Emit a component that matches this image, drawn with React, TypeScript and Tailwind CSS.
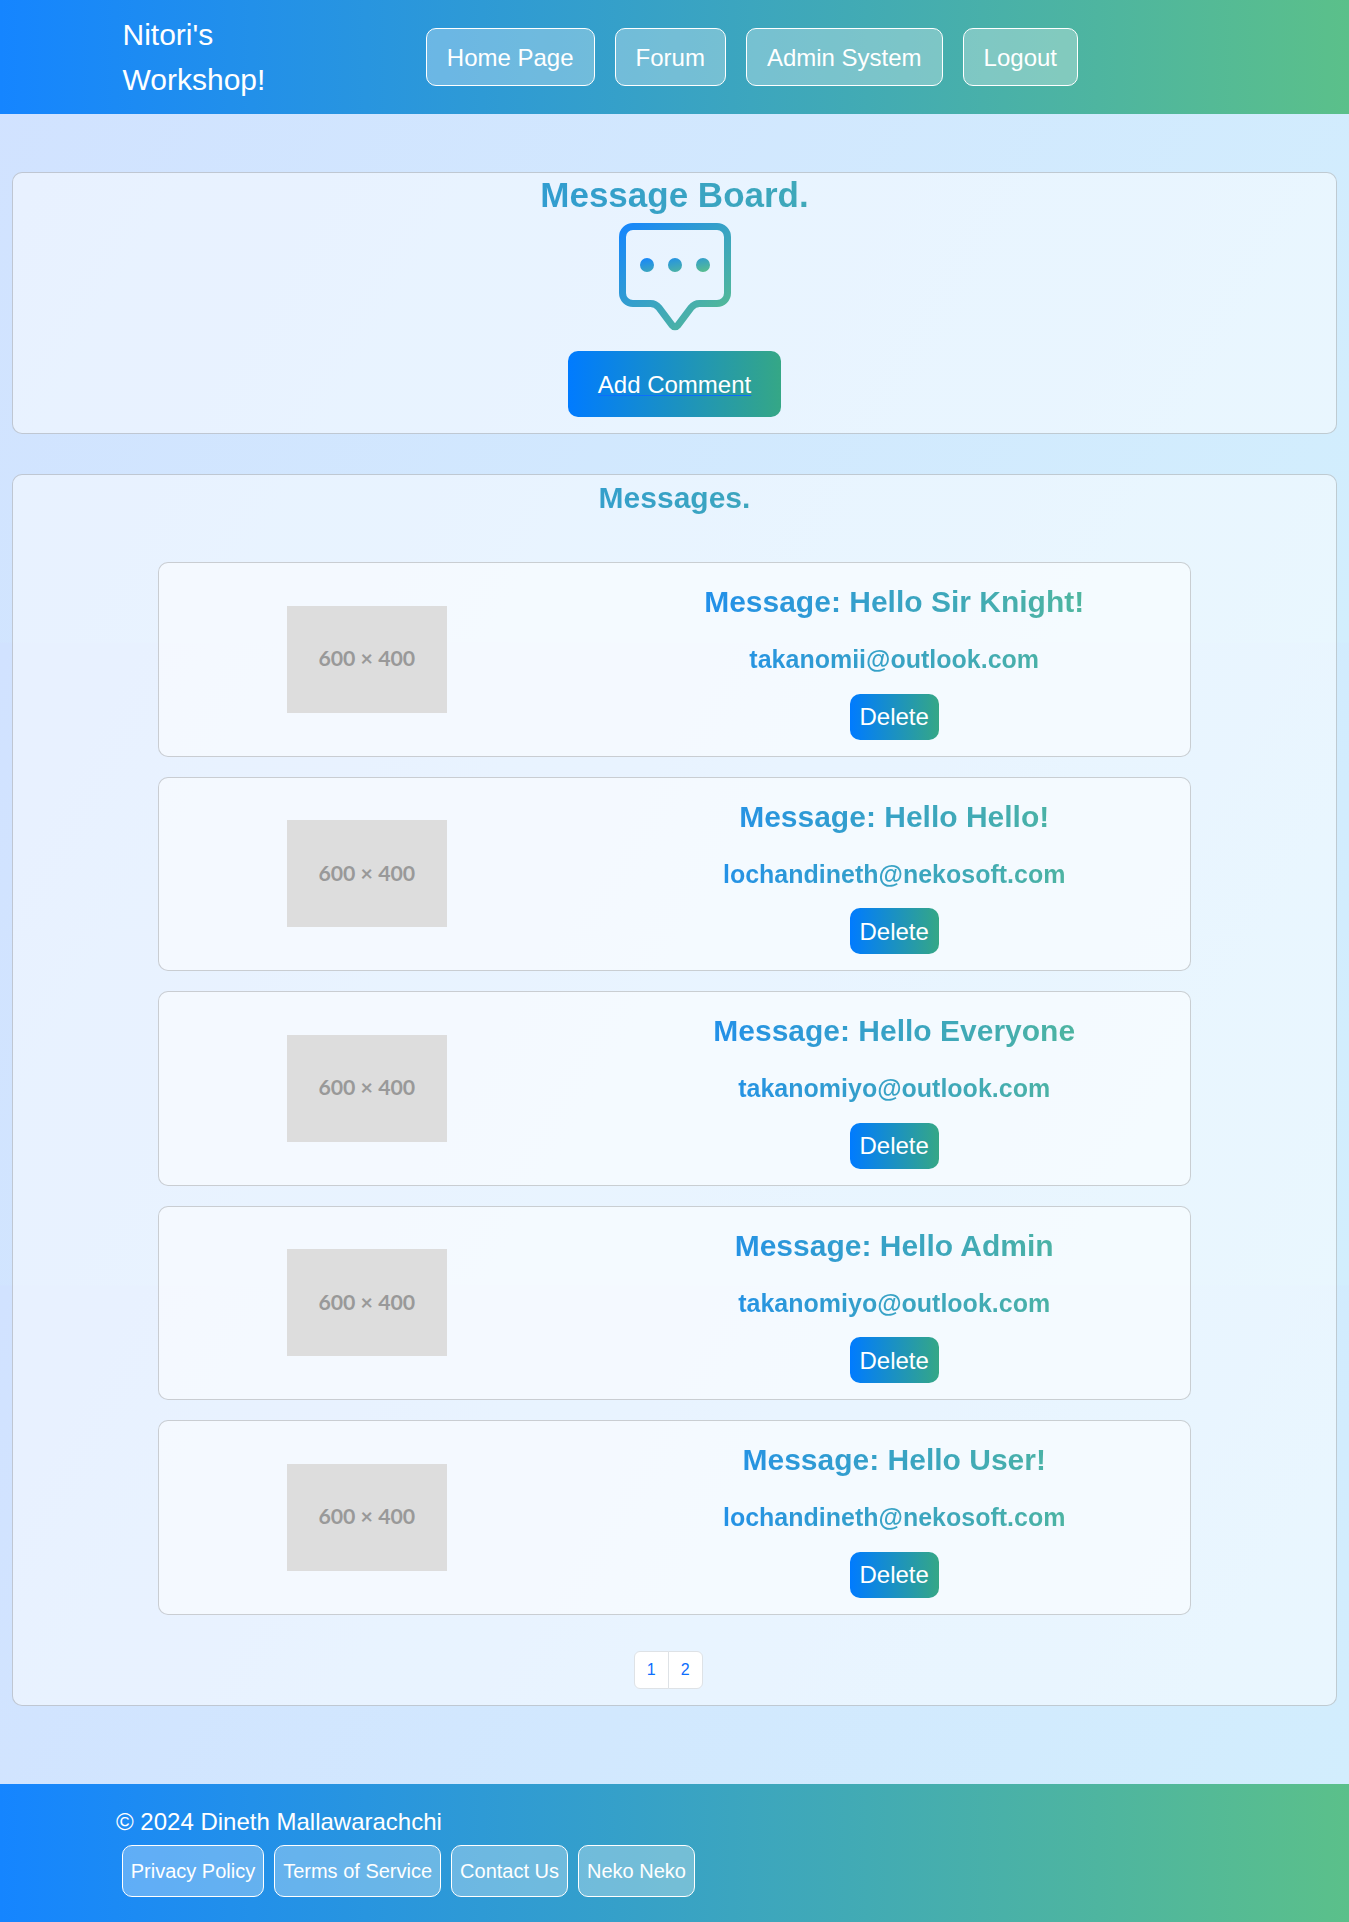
const navLinks = ["Home Page", "Forum", "Admin System", "Logout"];
const footerLinks = ["Privacy Policy", "Terms of Service", "Contact Us", "Neko Neko"];
const messages = [
  { title: "Hello Sir Knight!", email: "takanomii@outlook.com" },
  { title: "Hello Hello!", email: "lochandineth@nekosoft.com" },
  { title: "Hello Everyone", email: "takanomiyo@outlook.com" },
  { title: "Hello Admin", email: "takanomiyo@outlook.com" },
  { title: "Hello User!", email: "lochandineth@nekosoft.com" },
];

const gradientText = "bg-[linear-gradient(to_right,#1585ff,#5bc08a)] bg-clip-text font-bold text-transparent";
const gradientButton = "rounded-[10px] bg-[linear-gradient(to_right,#007bff,#35a786)] text-2xl leading-9 text-white";
const bar = "bg-[linear-gradient(to_right,#1585ff,#5bc08a)]";
const panel = "rounded-[10px] border border-black/[0.175] bg-white/50";

function ChatIcon() {
  return (
    <svg width="112" height="112" viewBox="0 0 16 16" fill="url(#chat)">
      <defs>
        <linearGradient id="chat" x1="0" y1="0" x2="1" y2="1">
          <stop offset="0" stopColor="#1585ff" />
          <stop offset="1" stopColor="#5bc08a" />
        </linearGradient>
      </defs>
      <path d="M14 1a1 1 0 0 1 1 1v8a1 1 0 0 1-1 1h-2.5a2 2 0 0 0-1.6.8L8 14.333 6.1 11.8a2 2 0 0 0-1.6-.8H2a1 1 0 0 1-1-1V2a1 1 0 0 1 1-1zM2 0a2 2 0 0 0-2 2v8a2 2 0 0 0 2 2h2.5a1 1 0 0 1 .8.4l1.9 2.533a1 1 0 0 0 1.6 0l1.9-2.533a1 1 0 0 1 .8-.4H14a2 2 0 0 0 2-2V2a2 2 0 0 0-2-2z" />
      <path d="M5 6a1 1 0 1 1-2 0 1 1 0 0 1 2 0m4 0a1 1 0 1 1-2 0 1 1 0 0 1 2 0m4 0a1 1 0 1 1-2 0 1 1 0 0 1 2 0" />
    </svg>
  );
}

function MessageCard({ title, email }: { title: string; email: string }) {
  return (
    <article className={`${panel} flex h-[194.5px] items-center`}>
      <div className="flex w-[415px] shrink-0 justify-center">
        <div className="flex h-[106.67px] w-40 items-center justify-center bg-[#dddddd] font-['Lato',sans-serif] text-[21.3px] font-bold text-[#999999]">
          600 × 400
        </div>
      </div>
      <div className="ml-[24.4px] flex w-[591px] shrink-0 flex-col items-center gap-4 text-center">
        <h3 className={`${gradientText} w-full text-[30px] leading-[45px]`}>Message: {title}</h3>
        <p className={`${gradientText} -mb-px w-full pt-px text-[25px] leading-[37.5px]`}>{email}</p>
        <button className={`${gradientButton} px-[10px] pt-[5.5px] pb-[4.5px]`}>Delete</button>
      </div>
    </article>
  );
}

export default function App() {
  return (
    <div className="flex min-h-[1922px] flex-col bg-[linear-gradient(120deg,#d1e2ff,#d2eefd)] bg-[length:100%_642.67px] font-['Liberation_Sans',Arial,sans-serif]">
      <header className={`${bar} flex h-[114px] items-center pl-[122.5px]`}>
        <a className="w-[303.3px] text-[30px] leading-[45px] text-white">
          Nitori's
          <br />
          Workshop!
        </a>
        <nav className="flex gap-5">
          {navLinks.map((label) => (
            <a key={label} className="rounded-[10px] border border-white bg-white/30 px-5 pt-[11px] pb-[9px] text-2xl leading-9 text-white">
              {label}
            </a>
          ))}
        </nav>
      </header>

      <main className="flex grow flex-col gap-10 px-3 pt-[58px]">
        <section className={`${panel} flex h-[262px] flex-col items-center`}>
          <h1 className={`${gradientText} mb-[7px] w-full pt-px text-center text-[35px] leading-[42px]`}>Message Board.</h1>
          <ChatIcon />
          <a className={`${gradientButton} mt-4 px-[30px] pt-4 pb-[14px] underline decoration-[#0d6efd] decoration-1 underline-offset-2`}>
            Add Comment
          </a>
        </section>

        <section className={`${panel} flex h-[1232px] flex-col`}>
          <h2 className={`${gradientText} text-center text-[30px] leading-[45px]`}>Messages.</h2>
          <div className="mt-[42px] ml-[145.3px] flex w-[1032.4px] flex-col gap-5">
            {messages.map((message) => (
              <MessageCard key={message.title} {...message} />
            ))}
          </div>
          <nav className="mt-[36.5px] mr-[12.6px] flex justify-center text-base leading-6 text-[#0d6efd]">
            <a className="rounded-l-md border border-[#dee2e6] bg-white px-3 py-1.5">1</a>
            <a className="-ml-px rounded-r-md border border-[#dee2e6] bg-white px-3 py-1.5">2</a>
          </nav>
        </section>
      </main>

      <footer className={`${bar} h-[138px] pt-5 pl-[116px] text-white`}>
        <p className="text-2xl leading-9">© 2024 Dineth Mallawarachchi</p>
        <div className="mt-[5px] ml-[5.7px] flex gap-[10px]">
          {footerLinks.map((label) => (
            <a key={label} className="rounded-[10px] border border-white bg-white/30 px-2 py-[10px] text-xl leading-[30px]">
              {label}
            </a>
          ))}
        </div>
      </footer>
    </div>
  );
}
